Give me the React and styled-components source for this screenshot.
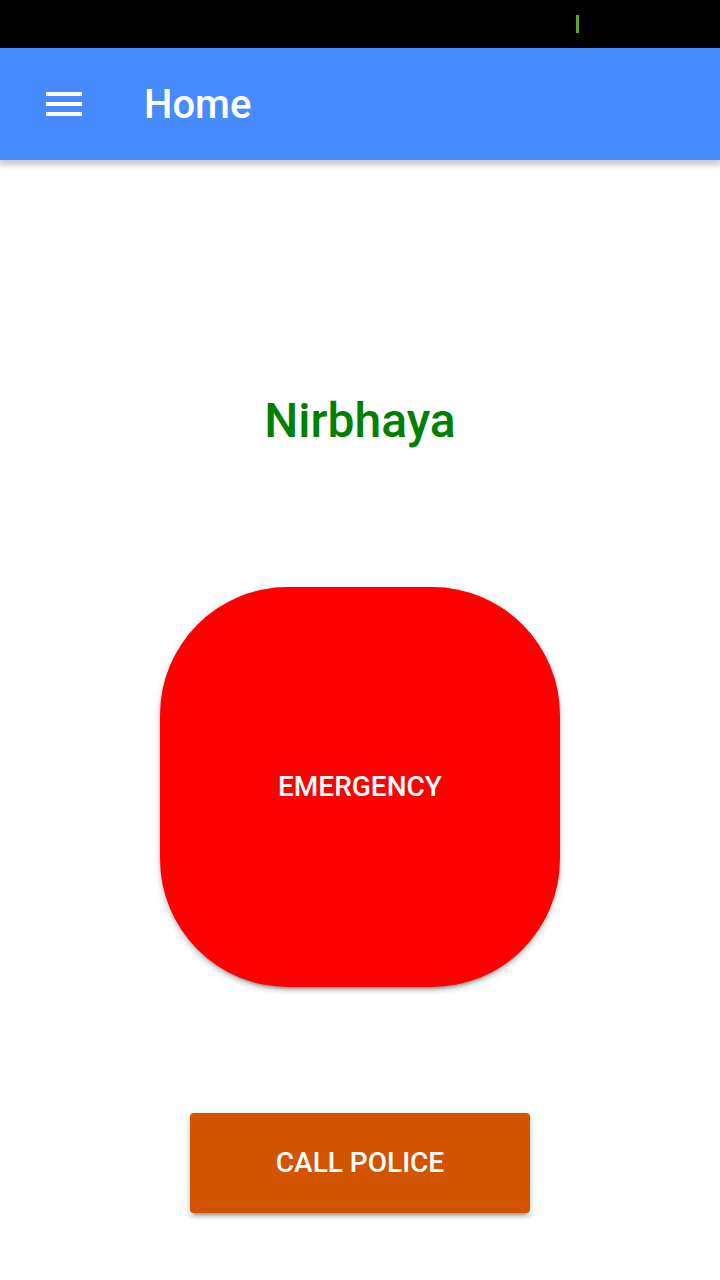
import React from "react";
import styled, { createGlobalStyle } from "styled-components";

const GlobalStyle = createGlobalStyle`
  * { box-sizing: border-box; }
  body {
    margin: 0;
    background: #fff;
    font-family: Roboto, "Liberation Sans", sans-serif;
    font-weight: 500;
  }
`;

const Page = styled.div`
  display: flex;
  flex-direction: column;
  min-height: 100vh;
`;

const StatusBar = styled.div`
  display: flex;
  justify-content: flex-end;
  align-items: center;
  height: 48px;
  padding-right: 141px;
  background: #000;
`;

const BatteryLevel = styled.span`
  width: 3px;
  height: 18px;
  background: #62a81c;
`;

const Toolbar = styled.header`
  display: flex;
  align-items: center;
  gap: 56px;
  height: 112px;
  padding: 0 40px;
  background: #488aff;
  color: #fff;
  box-shadow: 0 3px 6px 2px rgba(0, 0, 0, 0.22);
`;

const MenuButton = styled.button`
  display: flex;
  padding: 0;
  border: 0;
  background: none;
  color: inherit;
  cursor: pointer;
`;

const ToolbarTitle = styled.h1`
  margin: 0;
  padding-top: 2px;
  font-size: 40px;
  font-weight: 500;
  line-height: 48px;
`;

const Content = styled.main`
  display: flex;
  flex-direction: column;
  align-items: center;
  padding: 233px 32px 64px;
`;

const AppName = styled.h2`
  margin: 0 0 138px;
  color: #008000;
  font-size: 48px;
  font-weight: 500;
  line-height: 56px;
`;

const ActionButton = styled.button`
  padding: 0 0 2px;
  border: 0;
  color: #fff;
  font-family: inherit;
  font-size: 28px;
  font-weight: 500;
  text-transform: uppercase;
  cursor: pointer;
  box-shadow: 0 4px 4px rgba(0, 0, 0, 0.14), 0 6px 2px -4px rgba(0, 0, 0, 0.2),
    0 2px 10px rgba(0, 0, 0, 0.12);
`;

const EmergencyButton = styled(ActionButton)`
  width: 400px;
  height: 400px;
  margin-bottom: 126px;
  border-radius: 128px;
  background: #f00;
`;

const PoliceButton = styled(ActionButton)`
  width: 340px;
  height: 100px;
  border-radius: 4px;
  background: #d35400;
`;

export default function App() {
  return (
    <Page>
      <GlobalStyle />
      <StatusBar>
        <BatteryLevel />
      </StatusBar>
      <Toolbar>
        <MenuButton type="button" aria-label="Open menu">
          <svg width="48" height="48" viewBox="0 0 24 24" fill="currentColor" aria-hidden="true">
            <path d="M3 18h18v-2H3v2zm0-5h18v-2H3v2zm0-7v2h18V6H3z" />
          </svg>
        </MenuButton>
        <ToolbarTitle>Home</ToolbarTitle>
      </Toolbar>
      <Content>
        <AppName>Nirbhaya</AppName>
        <EmergencyButton type="button">Emergency</EmergencyButton>
        <PoliceButton type="button">Call Police</PoliceButton>
      </Content>
    </Page>
  );
}
